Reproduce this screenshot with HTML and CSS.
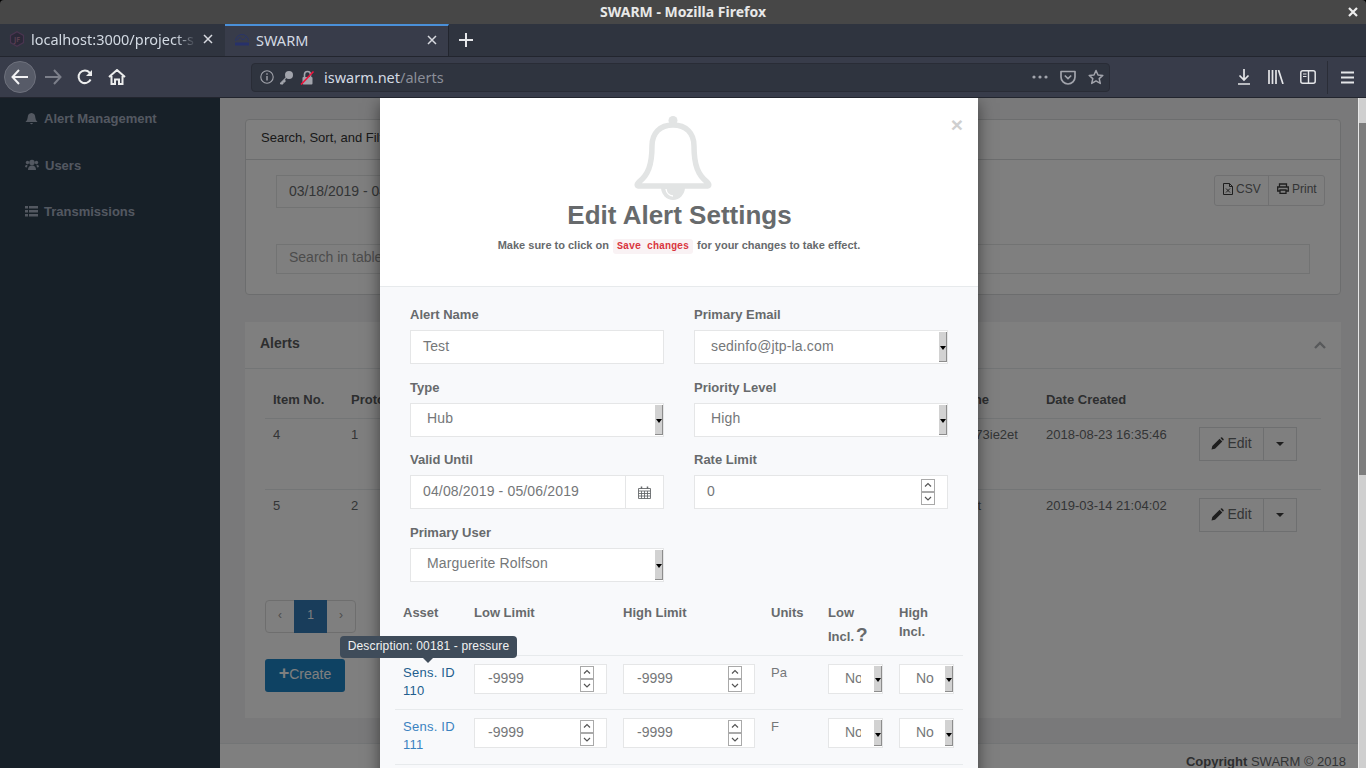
FILE: index.html
```html
<!DOCTYPE html>
<html lang="en">
<head>
  <meta charset="UTF-8" />
  <meta name="viewport" content="width=device-width, initial-scale=1.0" />
  <title>SWARM</title>
  <link rel="stylesheet" href="styles.css">
</head>
<body>
  <svg class="defs" width="0" height="0">
    <symbol id="spin" viewBox="0 0 14 26">
      <rect x="0.5" y="0.5" width="13" height="12" fill="#fff" stroke="#a9a9a9"/>
      <rect x="0.5" y="13.5" width="13" height="12" fill="#fff" stroke="#a9a9a9"/>
      <path d="M4 7.5 7 4.5 10 7.5M4 18 7 21 10 18" fill="none" stroke="#555" stroke-width="1.2"/>
    </symbol>
    <symbol id="pencil" viewBox="0 0 13 13">
      <path d="M0.5 12.5 1.3 9 8.6 1.8 11.3 4.5 4 11.7ZM9.4 1 10 .5Q10.6 0 11.2.5L12.6 1.9Q13 2.5 12.5 3L12 3.7Z" fill="#3d3d3d"/>
    </symbol>
  </svg>

  <header class="browser">
    <div class="titlebar">
      <span>SWARM - Mozilla Firefox</span>
      <svg class="win-close" width="10" height="10" viewBox="0 0 10 10"><path d="M1 1 9 9M9 1 1 9" stroke="#eee" stroke-width="2.2"/></svg>
    </div>
    <div class="tabstrip">
      <div class="tab">
        <svg class="favicon" width="16" height="16" viewBox="0 0 16 16"><path d="M8 .8 14.5 4.4V11.6L8 15.2 1.5 11.6V4.4Z" fill="#2b2838" stroke="#4a3550" stroke-width="1.2"/><text x="8" y="10.5" font-size="7" font-weight="700" text-anchor="middle" fill="#5a4050">JF</text></svg>
        <span class="tab-label tab-fade">localhost:3000/project-s</span>
        <svg class="tab-x" width="10" height="10" viewBox="0 0 10 10"><path d="M1 1 9 9M9 1 1 9" stroke="#d8dae0" stroke-width="1.5"/></svg>
      </div>
      <div class="tab tab-active">
        <svg class="favicon" width="16" height="16" viewBox="0 0 16 16"><path d="M1.5 9A6.5 6.5 0 0 1 14.5 9" fill="none" stroke="#2a3568" stroke-width="1"/><path d="M3 8 6 5.5 9 8 13 4" fill="none" stroke="#2a3568" stroke-width="1"/><rect x="1" y="10.5" width="14" height="3" fill="#27316a"/></svg>
        <span class="tab-label">SWARM</span>
        <svg class="tab-x" width="10" height="10" viewBox="0 0 10 10"><path d="M1 1 9 9M9 1 1 9" stroke="#d8dae0" stroke-width="1.5"/></svg>
      </div>
      <svg class="tab-new" width="14" height="14" viewBox="0 0 14 14"><path d="M7 0V14M0 7H14" stroke="#e6e7ea" stroke-width="2"/></svg>
    </div>
    <div class="toolbar">
      <div class="back-btn">
        <svg width="18" height="16" viewBox="0 0 18 16"><path d="M8 1 1.5 8 8 15M2 8H17" fill="none" stroke="#f2f2f4" stroke-width="2"/></svg>
      </div>
      <svg class="tool-fwd" width="18" height="16" viewBox="0 0 18 16"><path d="M10 1 16.5 8 10 15M1 8H16" fill="none" stroke="#7c7f8a" stroke-width="2"/></svg>
      <svg class="tool-reload" width="16" height="16" viewBox="0 0 16 16"><path d="M13.6 10.5A6.3 6.3 0 1 1 12.6 3.6L14.5 5.5" fill="none" stroke="#eceded" stroke-width="2"/><path d="M15 1V7H9Z" fill="#eceded"/></svg>
      <svg class="tool-home" width="18" height="16" viewBox="0 0 18 16"><path d="M1 8 9 1 17 8M3.5 7V15H7V10.5H11V15H14.5V7" fill="none" stroke="#eceded" stroke-width="2"/></svg>
      <div class="urlbar">
        <svg width="14" height="14" viewBox="0 0 14 14"><circle cx="7" cy="7" r="6.2" fill="none" stroke="#a2a4ac" stroke-width="1.1"/><path d="M7 6V10.5M7 3.2V4.8" stroke="#a2a4ac" stroke-width="1.4"/></svg>
        <svg class="url-key" width="15" height="15" viewBox="0 0 15 15"><circle cx="10" cy="5" r="4" fill="#a2a4ac"/><path d="M7.5 7 1.5 13V14H4V12H6V10" fill="#a2a4ac" stroke="#a2a4ac"/></svg>
        <svg class="url-lock" width="15" height="15" viewBox="0 0 15 15"><path d="M4.5 7V4.5A3 3 0 0 1 10.5 4.5V7" fill="none" stroke="#a2a4ac" stroke-width="1.6"/><rect x="2.5" y="7" width="10" height="7.5" rx="1" fill="#a2a4ac"/><path d="M1 14.5 13.5 1.5" stroke="#f0133c" stroke-width="1.6"/></svg>
        <span class="url-text">iswarm.net<span class="url-path">/alerts</span></span>
        <svg class="url-dots" width="16" height="4" viewBox="0 0 16 4"><circle cx="2" cy="2" r="1.6" fill="#a2a4ac"/><circle cx="8" cy="2" r="1.6" fill="#a2a4ac"/><circle cx="14" cy="2" r="1.6" fill="#a2a4ac"/></svg>
        <svg class="url-pocket" width="16" height="15" viewBox="0 0 16 15"><path d="M1 1.5H15V7A7 7 0 0 1 1 7Z" fill="none" stroke="#a2a4ac" stroke-width="1.7" stroke-linejoin="round"/><path d="M4.8 5.5 8 8.5 11.2 5.5" fill="none" stroke="#a2a4ac" stroke-width="1.7"/></svg>
        <svg class="url-star" width="16" height="16" viewBox="0 0 16 16"><path d="M8 1.5 10 6 14.8 6.4 11.2 9.6 12.3 14.4 8 11.9 3.7 14.4 4.8 9.6 1.2 6.4 6 6Z" fill="none" stroke="#a2a4ac" stroke-width="1.5" stroke-linejoin="round"/></svg>
      </div>
      <div class="tool-right">
        <svg width="14" height="16" viewBox="0 0 14 16"><path d="M7 0V11M2.5 6.5 7 11 11.5 6.5M1 15H13" fill="none" stroke="#e4e5e8" stroke-width="1.7"/></svg>
        <svg class="tool-lib" width="16" height="14" viewBox="0 0 16 14"><path d="M1 0V14M4.5 0V14M8 0V14M10.5 0 15 14" fill="none" stroke="#e4e5e8" stroke-width="1.7"/></svg>
        <svg class="tool-side" width="16" height="14" viewBox="0 0 16 14"><rect x=".8" y=".8" width="14.4" height="12.4" rx="2" fill="none" stroke="#e4e5e8" stroke-width="1.5"/><path d="M8.5 1V13" stroke="#e4e5e8" stroke-width="1.4"/><path d="M3 4H6.5M3 6.5H6.5" stroke="#e4e5e8" stroke-width="1"/></svg>
        <span class="tool-sep"></span>
        <svg width="13" height="13" viewBox="0 0 13 13"><path d="M0 1.5H13M0 6.5H13M0 11.5H13" stroke="#e4e5e8" stroke-width="1.8"/></svg>
      </div>
    </div>
  </header>

  <div class="viewport">
    <div class="page">
      <aside class="sidebar">
        <a class="side-item">
          <svg width="13" height="13" viewBox="0 0 13 13"><path d="M6.5 1Q10.2 1.300 10.300 5.500 10.500 8.500 12.500 10H.5Q2.500 8.500 2.700 5.500 2.800 1.300 6.500 1ZM5 11H8Q6.500 13.500 5 11Z" fill="#a7b1c2"/></svg>
          Alert Management
        </a>
        <a class="side-item">
          <svg class="side-users" width="14" height="12" viewBox="0 0 14 12"><circle cx="7" cy="3.500" r="2.700" fill="#a7b1c2"/><path d="M3 11Q3 6.500 7 6.500T11 11Z" fill="#a7b1c2"/><circle cx="2.500" cy="3.500" r="1.700" fill="#a7b1c2"/><circle cx="11.500" cy="3.500" r="1.700" fill="#a7b1c2"/><path d="M0 8Q0 5.500 2.500 5.700L2 8.500ZM14 8Q14 5.500 11.500 5.700L12 8.500Z" fill="#a7b1c2"/></svg>
          Users
        </a>
        <a class="side-item">
          <svg width="13" height="11" viewBox="0 0 13 11"><path d="M0 0H3V2.500H0ZM4 0H13V2.500H4ZM0 4H3V6.500H0ZM4 4H13V6.500H4ZM0 8H3V10.500H0ZM4 8H13V10.500H4Z" fill="#a7b1c2"/></svg>
          Transmissions
        </a>
      </aside>

      <main class="main">
        <div class="content">
          <section class="card card-filter">
            <div class="filter-head">Search, Sort, and Filter</div>
            <div class="filter-body">
              <div class="filter-row">
                <div class="bg-input bg-date">03/18/2019 - 04/18/2019</div>
                <div class="btn-group">
                  <span class="btn-ex">
                    <svg width="10" height="12" viewBox="0 0 10 12"><path d="M.5.500H6.500L9.500 3.500V11.500H.5ZM6.500.500V3.500H9.500" fill="none" stroke="#3d3d3d"/><path d="M3 5.500 7 9.500M7 5.500 3 9.500" stroke="#3d3d3d"/></svg>
                    CSV
                  </span>
                  <span class="btn-ex">
                    <svg width="12" height="11" viewBox="0 0 12 11"><path d="M2.500 4V1H9.500V4M2.500 8H.7V4H11.300V8H9.500M3 7H9V10.300H3Z" fill="none" stroke="#3d3d3d" stroke-width="1.300"/></svg>
                    Print
                  </span>
                </div>
              </div>
              <div class="bg-input bg-search">Search in table</div>
            </div>
          </section>

          <section class="card card-alerts">
            <div class="alerts-head">
              <span>Alerts</span>
              <svg width="12" height="8" viewBox="0 0 12 8"><path d="M1 7 6 2 11 7" fill="none" stroke="#b0b3b6" stroke-width="2.400"/></svg>
            </div>
            <div class="alerts-body">
              <table class="alerts-table">
                <colgroup>
                  <col class="c-item"><col class="c-proto"><col class="c-desc"><col class="c-name"><col class="c-date"><col class="c-act">
                </colgroup>
                <thead>
                  <tr><th>Item No.</th><th>Protocol</th><th>Description</th><th>Name</th><th>Date Created</th><th></th></tr>
                </thead>
                <tbody>
                  <tr>
                    <td>4</td><td>1</td><td>Test</td><td>a3g73ie2et</td><td>2018-08-23 16:35:46</td>
                    <td>
                      <div class="split">
                        <span class="split-main"><svg width="13" height="13"><use href="#pencil"/></svg> Edit</span>
                        <span class="split-caret"></span>
                      </div>
                    </td>
                  </tr>
                  <tr>
                    <td>5</td><td>2</td><td>Test</td><td>w3et</td><td>2019-03-14 21:04:02</td>
                    <td>
                      <div class="split">
                        <span class="split-main"><svg width="13" height="13"><use href="#pencil"/></svg> Edit</span>
                        <span class="split-caret"></span>
                      </div>
                    </td>
                  </tr>
                </tbody>
              </table>
              <div class="pager">
                <span class="pager-item">‹</span>
                <span class="pager-item pager-on">1</span>
                <span class="pager-item">›</span>
              </div>
              <a class="btn-create"><b>+</b>Create</a>
            </div>
          </section>
        </div>
        <footer class="footer"><b>Copyright</b> SWARM © 2018</footer>
      </main>
    </div>

    <div class="backdrop"></div>

    <div class="modal">
      <div class="modal-head">
        <span class="modal-x">×</span>
        <svg class="modal-bell" width="80" height="86" viewBox="0 0 80 86">
          <circle cx="40" cy="5.500" r="4.500" fill="#e2e4e4"/>
          <path d="M28 72A12 13 0 0 0 52 72Z" fill="#e2e4e4"/>
          <path d="M33 74A7.500 8 0 0 0 40 81" fill="none" stroke="#fff" stroke-width="1.400"/>
          <path d="M40 10C27 10 19 18 19 31 19 50 15 60 6 67 3 70 4 71 7 71H73C76 71 77 70 74 67 65 60 61 50 61 31 61 18 53 10 40 10Z" fill="#fff" stroke="#e2e4e4" stroke-width="5.500" stroke-linejoin="round"/>
        </svg>
        <h2 class="modal-title">Edit Alert Settings</h2>
        <p class="modal-note">Make sure to click on <code>Save changes</code> for your changes to take effect.</p>
      </div>

      <div class="modal-body">
        <div class="form-grid">
          <div class="field">
            <label>Alert Name</label>
            <div class="ctl">Test</div>
          </div>
          <div class="field">
            <label>Primary Email</label>
            <div class="ctl ctl-sel"><span class="sel-text">sedinfo@jtp-la.com</span><i class="sel-arrow"></i></div>
          </div>
          <div class="field">
            <label>Type</label>
            <div class="ctl ctl-sel"><span class="sel-text">Hub</span><i class="sel-arrow"></i></div>
          </div>
          <div class="field">
            <label>Priority Level</label>
            <div class="ctl ctl-sel"><span class="sel-text">High</span><i class="sel-arrow"></i></div>
          </div>
          <div class="field">
            <label>Valid Until</label>
            <div class="ctl ctl-date">
              <span class="date-text">04/08/2019 - 05/06/2019</span>
              <span class="date-addon">
                <svg width="13" height="13" viewBox="0 0 13 13"><path d="M.5 2.500H12.500V12.500H.5ZM.5 5H12.500M3.500 5V12.500M6.500 5V12.500M9.500 5V12.500M.5 7.500H12.500M.5 10H12.500" fill="none" stroke="#676a6c" stroke-width=".9"/><path d="M3.500 .5V3M9.500 .5V3" stroke="#676a6c" stroke-width="1.500"/></svg>
              </span>
            </div>
          </div>
          <div class="field">
            <label>Rate Limit</label>
            <div class="ctl ctl-num"><span>0</span><svg width="14" height="26"><use href="#spin"/></svg></div>
          </div>
          <div class="field">
            <label>Primary User</label>
            <div class="ctl ctl-sel"><span class="sel-text">Marguerite Rolfson</span><i class="sel-arrow"></i></div>
          </div>
        </div>

        <table class="limits">
          <colgroup>
            <col class="l-asset"><col class="l-low"><col class="l-high"><col class="l-units"><col class="l-linc"><col class="l-hinc">
          </colgroup>
          <thead>
            <tr>
              <th>Asset</th>
              <th>Low Limit</th>
              <th>High Limit</th>
              <th>Units</th>
              <th>Low<span class="incl-low">Incl.<span class="qmark">?</span></span></th>
              <th>High<br>Incl.</th>
            </tr>
          </thead>
          <tbody>
            <tr>
              <td><a class="sens sens-hover">Sens. ID<br>110</a></td>
              <td><div class="num"><span>-9999</span><svg width="14" height="26"><use href="#spin"/></svg></div></td>
              <td><div class="num"><span>-9999</span><svg width="14" height="26"><use href="#spin"/></svg></div></td>
              <td>Pa</td>
              <td><div class="mini mini-clip"><span>No</span><i class="sel-arrow"></i></div></td>
              <td><div class="mini"><span>No</span><i class="sel-arrow"></i></div></td>
            </tr>
            <tr>
              <td><a class="sens">Sens. ID<br>111</a></td>
              <td><div class="num"><span>-9999</span><svg width="14" height="26"><use href="#spin"/></svg></div></td>
              <td><div class="num"><span>-9999</span><svg width="14" height="26"><use href="#spin"/></svg></div></td>
              <td>F</td>
              <td><div class="mini mini-clip"><span>No</span><i class="sel-arrow"></i></div></td>
              <td><div class="mini"><span>No</span><i class="sel-arrow"></i></div></td>
            </tr>
          </tbody>
        </table>
      </div>
    </div>

    <div class="tooltip">Description: 00181 - pressure</div>
    <div class="scrollbar"><span class="scroll-thumb"></span></div>
  </div>
</body>
</html>
```

FILE: styles.css
```css
* { box-sizing: border-box; }
html, body { margin: 0; height: 100%; overflow: hidden; }
body { font-family: "Liberation Sans", Arial, sans-serif; font-size: 13px; color: #676a6c; background: #000; }
.defs { position: absolute; }
svg { display: block; flex: none; }

/* browser chrome */
.browser { height: 98px; font-family: "Noto Sans", sans-serif; }
.titlebar {
  height: 24px;
  background: #474747;
  border-radius: 4px 4px 0 0;
  color: #e8e8e8;
  font-size: 14px;
  font-weight: 700;
  line-height: 24px;
  text-align: center;
  position: relative;
}
.win-close { position: absolute; right: 8px; top: 7px; }
.tabstrip { height: 33px; background: #2f343f; display: flex; align-items: stretch; border-bottom: 1px solid #22252e; }
.tab { width: 225px; display: flex; align-items: center; padding: 0 9px 2px; color: #d3dae3; font-size: 14.5px; }
.tab-active { width: 224px; background: #383c4a; border-top: 2px solid #4a90d9; border-right: 1px solid #22252e; padding: 0 9px 3px; }
.favicon { margin-right: 6px; }
.tab-label { flex: 1; white-space: nowrap; overflow: hidden; }
.tab-fade { -webkit-mask-image: linear-gradient(to right, #000 88%, transparent); mask-image: linear-gradient(to right, #000 88%, transparent); margin-right: 7px; }
.tab-x { margin-right: 3px; }
.tab-active .tab-x { margin-right: 2px; }
.tab-new { align-self: center; margin-left: 10px; }

.toolbar { height: 41px; background: #383c4a; border-bottom: 1px solid #22252e; display: flex; align-items: center; padding: 0 12px 0 4px; }
.back-btn {
  width: 32px;
  height: 32px;
  border-radius: 50%;
  background: #575b68;
  border: 1px solid #6e717d;
  display: flex;
  align-items: center;
  justify-content: center;
}
.tool-fwd { margin-left: 8px; }
.tool-reload { margin-left: 15px; }
.tool-home { margin-left: 15px; }
.urlbar {
  width: 859px;
  height: 29px;
  margin-left: 125px;
  background: #2f343f;
  border: 1px solid #292c36;
  border-radius: 4px;
  display: flex;
  align-items: center;
  padding: 0 5px 0 8px;
}
.url-key { margin-left: 5px; }
.url-lock { margin-left: 6px; }
.url-text { margin-left: 9px; flex: 1; color: #d3dae3; font-size: 14.5px; }
.url-path { color: #8b8e98; }
.url-dots { margin-right: 12px; }
.url-pocket { margin-right: 12px; }
.tool-right { margin-left: auto; display: flex; align-items: center; }
.tool-lib { margin-left: 17px; }
.tool-side { margin-left: 16px; }
.tool-sep { width: 1px; height: 33px; background: #2a2d37; margin: 0 13px 0 11px; }

/* page behind the modal */
.viewport { height: 670px; position: relative; overflow: hidden; background: #f3f3f4; }
.page { display: flex; height: 100%; }
.sidebar { width: 220px; flex: none; background: #2f4050; padding: 0; }
.side-item {
  height: 46.7px;
  padding-left: 25px;
  display: flex;
  align-items: center;
  gap: 6px;
  color: #a7b1c2;
  font-weight: 700;
  font-size: 13px;
  position: relative;
  top: -3px;
}
.main { flex: 1; padding-right: 8px; min-width: 0; }
.content { padding: 21px 17px 0 25px; }
.card { background: #fff; width: 1096px; }
.card-filter { border: 1px solid #d9dbdd; border-radius: 4px; height: 176px; margin-bottom: 27px; }
.filter-head { height: 40px; padding-left: 15px; line-height: 35px; color: #333; border-bottom: 1px solid #d9dbdd; }
.filter-body { padding: 15px 15px 0 30px; }
.filter-row { display: flex; justify-content: space-between; height: 69px; }
.bg-input { border: 1px solid #e5e6e7; padding-left: 12px; font-size: 14px; color: #676a6c; }
.bg-date { width: 360px; height: 33px; line-height: 30px; }
.bg-search { width: 1034px; height: 30px; line-height: 24px; color: #999; }
.btn-group { display: flex; height: 31px; border: 1px solid #e0e1e2; border-radius: 3px; margin-right: 0; width: 111px; }
.btn-ex { display: flex; align-items: center; gap: 3px; padding: 0 8px 4px; color: #676a6c; font-size: 12px; }
.btn-ex:first-child { border-right: 1px solid #e0e1e2; width: 54px; }
.btn-ex:last-child { flex: 1; }

.card-alerts { height: 396px; }
.alerts-head {
  height: 47px;
  padding: 0 15px;
  border-bottom: 1px solid #e7eaec;
  display: flex;
  align-items: center;
  justify-content: space-between;
  font-size: 14px;
  font-weight: 700;
  color: #5a5c5e;
}
.alerts-head span { position: relative; top: -2px; }
.alerts-body { padding: 12px 20px 0; }
.alerts-table { width: 1056px; border-collapse: collapse; table-layout: fixed; }
.c-item { width: 78px; }
.c-proto { width: 200px; }
.c-desc { width: 402.6px; }
.c-name { width: 92.4px; }
.c-date { width: 153px; }
.c-act { width: 130px; }
.alerts-table th { text-align: left; padding: 10px 8px 9px; line-height: 18px; color: #5a5c5e; border-bottom: 1px solid #e7eaec; font-size: 13px; white-space: nowrap; }
.alerts-table td { padding: 8px; height: 71px; vertical-align: top; line-height: 15px; font-size: 13px; white-space: nowrap; }
.alerts-table tr + tr td { border-top: 1px solid #e7eaec; }
.split { display: flex; height: 34px; width: 98px; border: 1px solid #dcdee0; color: #676a6c; font-size: 14px; }
.split-main { width: 64px; border-right: 1px solid #dcdee0; display: flex; align-items: center; justify-content: center; gap: 3px; padding-bottom: 2px; }
.split-caret { flex: 1; position: relative; }
.split-caret::after {
  content: "";
  position: absolute;
  left: 12px;
  top: 14px;
  border-left: 4px solid transparent;
  border-right: 4px solid transparent;
  border-top: 4px solid #3d3d3d;
}
.pager { display: flex; width: 91px; height: 33px; margin-top: 39px; border: 1px solid #dddddd; border-radius: 4px; text-align: center; line-height: 29px; color: #999; font-size: 12px; }
.pager-item { flex: 1; }
.pager-on { flex: none; width: 33px; background: #337ab7; color: #fff; margin: -1px 0; line-height: 31px; }
.btn-create { display: block; width: 80px; height: 33px; margin-top: 26px; background: #1c84c6; border-radius: 3px; color: #fff; text-align: center; line-height: 29px; font-size: 14px; }
.btn-create b { font-size: 18px; }
.footer { margin-top: 25px; height: 40px; border-top: 1px solid #e7eaec; background: #fff; text-align: right; padding: 9px 12px 0 0; font-size: 13px; color: #676a6c; line-height: 18px; }
.footer b { color: #5a5c5e; }

/* modal layer */
.backdrop { position: absolute; inset: 0; background: rgba(0, 0, 0, 0.5); }
.modal {
  position: absolute;
  left: 380px;
  top: 0;
  width: 598px;
  height: 720px;
  background: #f8f9fb;
  box-shadow: 0 5px 15px rgba(0, 0, 0, 0.5);
}
.modal-head { height: 189px; background: #fff; border-bottom: 1px solid #e7eaec; padding-top: 17px; text-align: center; position: relative; }
.modal-x { position: absolute; right: 15px; top: 16px; font-size: 21px; line-height: 21px; font-weight: 700; color: #cfcfcf; }
.modal-bell { margin-left: 253px; }
.modal-title { margin: -2px 0 0 1px; font-size: 26px; line-height: 32px; font-weight: 700; color: #676a6c; }
.modal-note { margin: 7px 0 0; font-size: 11px; line-height: 15px; font-weight: 700; color: #676a6c; }
.modal-note code { font-family: "Liberation Mono", monospace; font-size: 10px; font-weight: 700; color: #d9363e; background: #f9f2f4; border-radius: 3px; padding: 2px 4px; margin: 0 1px; }

.modal-body { padding: 18.1px 15px 0; }
.form-grid { display: grid; grid-template-columns: 254px 254px; column-gap: 30px; row-gap: 13.77px; padding-left: 15px; }
.field label { display: block; font-size: 13px; font-weight: 700; line-height: 19.67px; margin-bottom: 5.23px; color: #676a6c; }
.ctl { height: 34px; background: #fff; border: 1px solid #e5e6e7; padding-left: 12px; font-size: 14px; line-height: 30px; color: #757779; display: flex; align-items: stretch; letter-spacing: .15px; }
.ctl-sel { padding-left: 16px; }
.sel-text { flex: 1; white-space: nowrap; overflow: hidden; }
.field:nth-child(n+3) .sel-text { line-height: 28px; }
.sel-arrow { display: block; flex: none; width: 8px; margin: 1px 0; background: #d2d2d2; border-right: 1px solid #8d8d8d; border-bottom: 1px solid #8d8d8d; position: relative; }
.sel-arrow::after {
  content: "";
  position: absolute;
  left: 1px;
  top: 50%;
  border-left: 3px solid transparent;
  border-right: 3px solid transparent;
  border-top: 4px solid #000;
}
.ctl-date { padding-right: 0; }
.date-text { flex: 1; }
.date-addon { width: 38px; border-left: 1px solid #e5e6e7; display: flex; align-items: center; justify-content: center; }
.ctl-num { justify-content: space-between; align-items: center; padding-right: 12px; }
.ctl-num span { position: relative; top: -1px; }

.limits { width: 568px; margin-top: 13px; border-collapse: collapse; table-layout: fixed; }
.l-asset { width: 71px; }
.l-low { width: 149px; }
.l-high { width: 148px; }
.l-units { width: 57px; }
.l-linc { width: 71px; }
.l-hinc { width: 72px; }
.limits th { text-align: left; vertical-align: top; padding: 8px 8px 7px; font-size: 13px; line-height: 19px; color: #676a6c; border-bottom: 1px solid #e7eaec; height: 60.5px; }
.incl-low { display: block; margin-top: 5px; }
.qmark { font-size: 19px; line-height: 16px; margin-left: 2px; }
.limits td { padding: 8px; height: 54.5px; vertical-align: top; line-height: 18px; border-bottom: 1px solid #e7eaec; color: #757779; }
.sens { display: block; color: #3a82c0; letter-spacing: .25px; }
.sens-hover { color: #225e8e; }
.num { width: 133px; height: 30px; background: #fff; border: 1px solid #e5e6e7; display: flex; align-items: center; justify-content: space-between; padding: 0 12px 0 13px; font-size: 14px; }
.num span { position: relative; top: -1px; }
.limits td:nth-child(3) .num { width: 132px; }
.mini { width: 55px; height: 30px; background: #fff; border: 1px solid #e5e6e7; display: flex; font-size: 14px; line-height: 26px; padding-left: 16px; justify-content: space-between; }
.mini-clip span { width: 16px; overflow: hidden; }
.mini span { white-space: nowrap; }

.tooltip {
  position: absolute;
  left: 340px;
  top: 538px;
  width: 177px;
  height: 22px;
  background: #3f4c5a;
  border-radius: 4px;
  color: #f2f2f2;
  font-size: 12px;
  line-height: 20px;
  text-align: center;
  letter-spacing: .14px;
}
.tooltip::after {
  content: "";
  position: absolute;
  left: 83px;
  top: 22px;
  border-left: 5px solid transparent;
  border-right: 5px solid transparent;
  border-top: 5px solid #3f4c5a;
}
.scrollbar { position: absolute; right: 0; top: 0; width: 8px; height: 100%; background: #cfcfcf; border-left: 1px solid #e8e8e8; }
.scroll-thumb { display: block; margin-top: 25px; height: 352px; background: #7d7d7d; }
```
